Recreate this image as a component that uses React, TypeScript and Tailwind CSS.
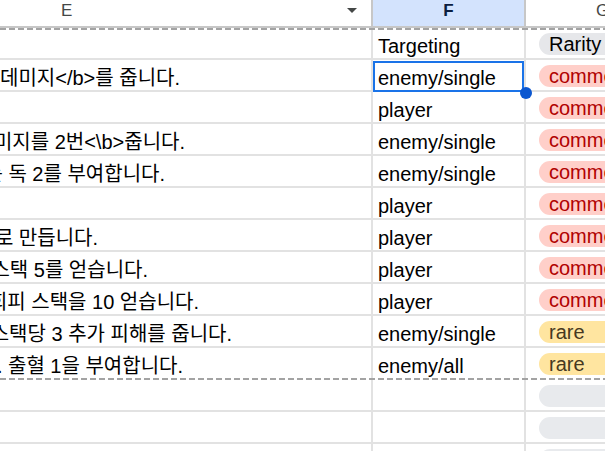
import React from "react";

type Chip = "header" | "common" | "rare" | "empty";

type Row = {
  text?: string;
  pr?: string;
  target?: string;
  chip: Chip;
};

const rows: Row[] = [
  { target: "Targeting", chip: "header" },
  { text: "적에게 <b>6 데미지</b>를 줍니다.", pr: "pr-[191px]", target: "enemy/single", chip: "common" },
  { target: "player", chip: "common" },
  { text: "적에게 <b>6 데미지를 2번<\\b>줍니다.", pr: "pr-[186px]", target: "enemy/single", chip: "common" },
  { text: "지속 피해를 주는 독 2를 부여합니다.", pr: "pr-[206px]", target: "enemy/single", chip: "common" },
  { target: "player", chip: "common" },
  { text: "카드 1장을 무작위로 만듭니다.", pr: "pr-[273px]", target: "player", chip: "common" },
  { text: "방어 스택 5를 얻습니다.", pr: "pr-[223px]", target: "player", chip: "common" },
  { text: "<b>회피 스택을 10 얻습니다.", pr: "pr-[172px]", target: "player", chip: "common" },
  { text: "독 스택당 3 추가 피해를 줍니다.", pr: "pr-[139px]", target: "enemy/single", chip: "rare" },
  { text: "피해를 줍니다. 출혈 1을 부여합니다.", pr: "pr-[188px]", target: "enemy/all", chip: "rare" },
  { chip: "empty" },
  { chip: "empty" },
  { chip: "empty" },
];

const chipStyle: Record<Chip, string> = {
  header: "bg-[#e6e7ea] text-black",
  common: "bg-[#ffcfc9] text-[#b10202]",
  rare: "bg-[#ffe5a0] text-[#473821]",
  empty: "bg-[#e8eaed]",
};

const chipLabel: Record<Chip, string> = {
  header: "Rarity",
  common: "common",
  rare: "rare",
  empty: "",
};

const Dashed = () => (
  <div className="h-[2px] w-full bg-[image:repeating-linear-gradient(90deg,#a3a3a3_0px,#a3a3a3_6px,transparent_6px,transparent_9px)]" />
);

export default function App() {
  return (
    <div className="h-[451px] w-[605px] overflow-hidden bg-white font-['Liberation_Sans','Noto_Sans_CJK_KR',sans-serif] text-black">
      {/* column headers */}
      <div className="flex h-[28px] border-b-2 border-[#c7c7c7] text-[17px] leading-[20px] text-[#444746]">
        <div className="flex w-[373px] shrink-0 items-start justify-between border-r-2 border-[#c7c7c7] pl-[61px] pr-[14px] pt-[1px]">
          <span>E</span>
          <svg width="10" height="5" viewBox="0 0 10 5" className="mt-[7px]">
            <path d="M0 0h10L5 5z" fill="#444746" />
          </svg>
        </div>
        <div className="flex w-[153px] shrink-0 items-start justify-center border-r-2 border-[#c7c7c7] bg-[#d3e3fd] pt-[1px] font-bold text-[#0b1d3f]">
          F
        </div>
        <div className="flex flex-1 items-start pl-[70px] pt-[1px]">G</div>
      </div>
      <Dashed />

      {rows.map((r, i) => {
        const last = i === 10;
        return (
          <React.Fragment key={i}>
            <div
              className={`flex text-[20px] leading-[23px] ${
                i === 0 ? "h-[30px] border-b-2 border-[#e2e2e2]" : last ? "h-[30px]" : "h-[32px] border-b-2 border-[#e2e2e2]"
              }`}
            >
              <div
                className={`flex w-[373px] shrink-0 items-end justify-end overflow-hidden whitespace-pre border-r-2 border-[#e2e2e2] ${r.pr ?? ""}`}
              >
                {r.text && <span>{r.text}</span>}
              </div>
              <div className="relative flex w-[153px] shrink-0 items-end whitespace-nowrap border-r-2 border-[#e2e2e2] pl-[5px]">
                {r.target}
                {i === 1 && (
                  <>
                    <div className="absolute -bottom-[2px] left-0 right-0 top-[1px] border-2 border-[#1a73e8]" />
                    <div className="absolute left-[147px] top-[27px] z-10 h-[12px] w-[12px] rounded-full bg-[#0b57d0]" />
                  </>
                )}
              </div>
              <div className="flex flex-1 items-end pb-[3px] pl-[13px]">
                <div
                  className={`h-[22px] w-[130px] shrink-0 rounded-full pl-[10px] leading-[22px] whitespace-nowrap ${chipStyle[r.chip]}`}
                >
                  {chipLabel[r.chip]}
                </div>
              </div>
            </div>
            {last && <Dashed />}
          </React.Fragment>
        );
      })}
    </div>
  );
}
